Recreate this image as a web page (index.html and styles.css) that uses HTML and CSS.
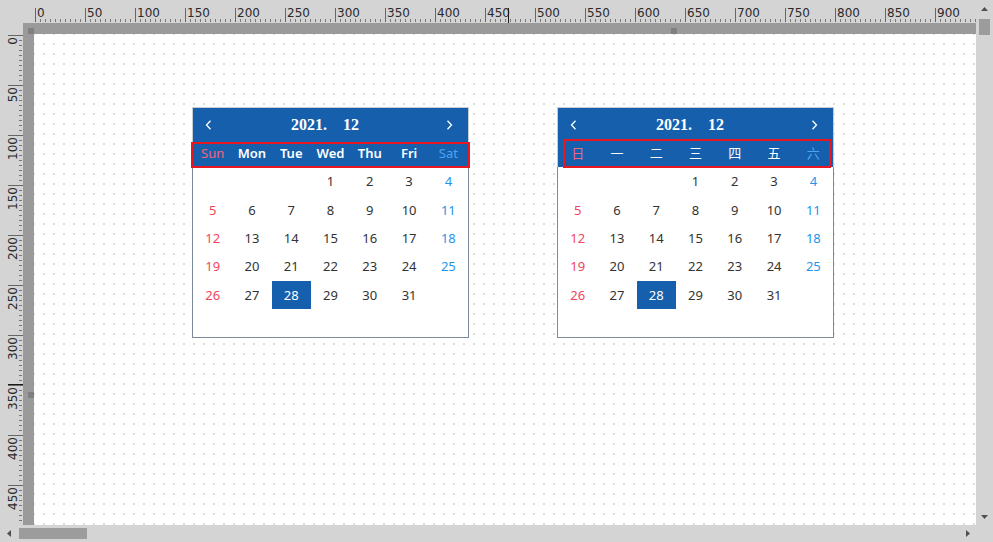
FILE: index.html
```html
<!DOCTYPE html>
<html lang="zh-CN">
<head>
<meta charset="utf-8">
<title>Calendar designer</title>
<link rel="stylesheet" href="styles.css">
</head>
<body>
<div class="window">
  <div class="workspace">
    <div class="ruler-top">
      <div class="scale-x">
        <span>0</span><span>50</span><span>100</span><span>150</span><span>200</span><span>250</span><span>300</span><span>350</span><span>400</span><span>450</span><span>500</span><span>550</span><span>600</span><span>650</span><span>700</span><span>750</span><span>800</span><span>850</span><span>900</span>
      </div>
    </div>
    <div class="ruler-left">
      <div class="scale-y">
        <div class="ylabel"><span>0</span></div>
        <div class="ylabel"><span>50</span></div>
        <div class="ylabel"><span>100</span></div>
        <div class="ylabel"><span>150</span></div>
        <div class="ylabel"><span>200</span></div>
        <div class="ylabel"><span>250</span></div>
        <div class="ylabel"><span>300</span></div>
        <div class="ylabel"><span>350</span></div>
        <div class="ylabel"><span>400</span></div>
        <div class="ylabel"><span>450</span></div>
      </div>
    </div>
    <div class="bar-corner"><i class="marker"></i></div>
    <div class="bar-top"><i class="marker marker-x"></i></div>
    <div class="bar-left"><i class="marker marker-y"></i></div>
    <div class="cursor-x"></div>
    <div class="cursor-y"></div>

    <div class="canvas">
      <div class="cal cal-1">
        <div class="cal-head">
          <div class="cal-title-row">
            <span class="nav"><svg width="7" height="10" viewBox="0 0 7 10"><path d="M5.5 0.8 L1.5 5 L5.5 9.2" fill="none" stroke="#fff" stroke-width="1.3"/></svg></span>
            <div class="cal-title">2021.&emsp;12</div>
            <span class="nav"><svg width="7" height="10" viewBox="0 0 7 10"><path d="M1.5 0.8 L5.5 5 L1.5 9.2" fill="none" stroke="#fff" stroke-width="1.3"/></svg></span>
          </div>
          <div class="cal-week">
            <span class="sun">Sun</span><span>Mon</span><span>Tue</span><span>Wed</span><span>Thu</span><span>Fri</span><span class="sat">Sat</span>
          </div>
        </div>
        <div class="cal-days">
          <span></span><span></span><span></span><span>1</span><span>2</span><span>3</span><span class="sat">4</span>
          <span class="sun">5</span><span>6</span><span>7</span><span>8</span><span>9</span><span>10</span><span class="sat">11</span>
          <span class="sun">12</span><span>13</span><span>14</span><span>15</span><span>16</span><span>17</span><span class="sat">18</span>
          <span class="sun">19</span><span>20</span><span>21</span><span>22</span><span>23</span><span>24</span><span class="sat">25</span>
          <span class="sun">26</span><span>27</span><span class="sel">28</span><span>29</span><span>30</span><span>31</span><span></span>
        </div>
      </div>

      <div class="cal cal-2">
        <div class="cal-head">
          <div class="cal-title-row">
            <span class="nav"><svg width="7" height="10" viewBox="0 0 7 10"><path d="M5.5 0.8 L1.5 5 L5.5 9.2" fill="none" stroke="#fff" stroke-width="1.3"/></svg></span>
            <div class="cal-title">2021.&emsp;12</div>
            <span class="nav"><svg width="7" height="10" viewBox="0 0 7 10"><path d="M1.5 0.8 L5.5 5 L1.5 9.2" fill="none" stroke="#fff" stroke-width="1.3"/></svg></span>
          </div>
          <div class="cal-week cal-week-cn">
            <span class="sun">日</span><span>一</span><span>二</span><span>三</span><span>四</span><span>五</span><span class="sat">六</span>
          </div>
        </div>
        <div class="cal-days">
          <span></span><span></span><span></span><span>1</span><span>2</span><span>3</span><span class="sat">4</span>
          <span class="sun">5</span><span>6</span><span>7</span><span>8</span><span>9</span><span>10</span><span class="sat">11</span>
          <span class="sun">12</span><span>13</span><span>14</span><span>15</span><span>16</span><span>17</span><span class="sat">18</span>
          <span class="sun">19</span><span>20</span><span>21</span><span>22</span><span>23</span><span>24</span><span class="sat">25</span>
          <span class="sun">26</span><span>27</span><span class="sel">28</span><span>29</span><span>30</span><span>31</span><span></span>
        </div>
      </div>

      <div class="annot annot-1"></div>
      <div class="annot annot-2"></div>
    </div>
  </div>

  <div class="vscroll">
    <div class="sb-btn"><svg width="7" height="4" viewBox="0 0 7 4"><path d="M0 4 L3.5 0 L7 4Z" fill="#505050"/></svg></div>
    <div class="vthumb"></div>
    <div class="sb-track"></div>
    <div class="sb-btn"><svg width="7" height="4" viewBox="0 0 7 4"><path d="M0 0 L3.5 4 L7 0Z" fill="#505050"/></svg></div>
  </div>
  <div class="hscroll">
    <div class="sb-btn"><svg width="4" height="7" viewBox="0 0 4 7"><path d="M4 0 L0 3.5 L4 7Z" fill="#505050"/></svg></div>
    <div class="hthumb"></div>
    <div class="sb-track"></div>
    <div class="sb-btn"><svg width="4" height="7" viewBox="0 0 4 7"><path d="M0 0 L4 3.5 L0 7Z" fill="#505050"/></svg></div>
  </div>
  <div class="sb-corner"></div>
</div>
</body>
</html>
```
FILE: styles.css
```css
* { box-sizing: border-box; }
html, body { margin: 0; padding: 0; }
body {
  width: 993px;
  height: 542px;
  overflow: hidden;
  background: #d4d4d4;
  font-family: "DejaVu Sans", "Liberation Sans", sans-serif;
}

.window {
  display: grid;
  grid-template-columns: 976px 17px;
  grid-template-rows: 525px 17px;
  width: 993px;
  height: 542px;
  background: #d4d4d4;
}

.workspace {
  grid-column: 1;
  grid-row: 1;
  display: grid;
  grid-template-columns: 23px 11px 942px;
  grid-template-rows: 23px 11px 491px;
  position: relative;
}

/* rulers */
.ruler-top {
  grid-column: 1 / 4;
  grid-row: 1;
  padding-left: 35px;
  overflow: hidden;
}
.scale-x {
  display: flex;
  height: 23px;
  background-image:
    linear-gradient(to right, #666 1px, transparent 1px),
    linear-gradient(to right, #777 1px, transparent 1px);
  background-size: 50px 14px, 5px 3px;
  background-position: 0 8px, 0 19px;
  background-repeat: repeat-x;
}
.scale-x span {
  flex: 0 0 50px;
  padding: 7px 0 0 2px;
  font-size: 12px;
  line-height: 12px;
  color: #2a2a2a;
}

.ruler-left {
  grid-column: 1;
  grid-row: 2 / 4;
  padding-top: 12px;
  overflow: hidden;
}
.scale-y {
  display: flex;
  flex-direction: column;
  width: 23px;
  background-image:
    linear-gradient(to bottom, #666 1px, transparent 1px),
    linear-gradient(to bottom, #777 1px, transparent 1px);
  background-size: 15px 50px, 3px 5px;
  background-position: 8px 0, 19px 0;
  background-repeat: repeat-y;
}
.ylabel {
  flex: 0 0 50px;
  display: flex;
  align-items: flex-start;
}
.ylabel span {
  writing-mode: vertical-rl;
  transform: rotate(180deg);
  margin: 2px 0 0 7px;
  font-size: 12px;
  line-height: 12px;
  color: #2a2a2a;
}

/* dark bars */
.bar-corner {
  grid-column: 2;
  grid-row: 2;
  background: #9a9a9a;
  display: flex;
  justify-content: flex-end;
  align-items: flex-end;
}
.bar-top {
  grid-column: 3;
  grid-row: 2;
  background: #9a9a9a;
  display: flex;
  align-items: flex-end;
}
.bar-left {
  grid-column: 2;
  grid-row: 3;
  background: #9a9a9a;
  display: flex;
  flex-direction: column;
  align-items: flex-end;
}
.marker {
  display: block;
  width: 6px;
  height: 6px;
  background: #808080;
}
.marker-x { margin-left: 637px; }
.marker-y { margin-top: 358px; }

.cursor-x {
  position: absolute;
  left: 508px;
  top: 8px;
  width: 1px;
  height: 15px;
  background: #1a1a1a;
}
.cursor-y {
  position: absolute;
  left: 8px;
  top: 384px;
  width: 15px;
  height: 1px;
  background: #1a1a1a;
}

/* canvas */
.canvas {
  grid-column: 3;
  grid-row: 3;
  position: relative;
  overflow: hidden;
  background-color: #fff;
  background-image:
    linear-gradient(to right, #fff 8px, transparent 8px),
    linear-gradient(to bottom, #fff 8px, #dedede 8px);
  background-size: 10px 10px;
  background-position: 1px 1px;
}

/* calendar */
.cal {
  position: absolute;
  top: 73px;
  width: 277px;
  font-family: "Noto Sans", "Noto Sans CJK SC", sans-serif;
}
.cal-1 { left: 158px; }
.cal-2 { left: 523px; }

.cal-head {
  background: #155fad;
  border: 1px solid #c6ccd3;
  border-bottom: 0;
}
.cal-title-row {
  height: 33px;
  display: flex;
  align-items: center;
  padding: 1px 15px 0 12px;
}
.nav {
  display: flex;
  width: 7px;
  height: 10px;
}
.cal-title {
  flex: 1;
  text-align: center;
  padding-right: 8px;
  font-family: "Liberation Serif", serif;
  font-weight: 700;
  font-size: 16px;
  color: #fff;
}
.cal-week {
  height: 26px;
  padding-bottom: 3px;
  display: grid;
  grid-template-columns: repeat(7, 1fr);
  align-items: center;
  justify-items: center;
  font-size: 13px;
  font-weight: 600;
  color: #fff;
}
.cal-week .sun { color: #f0677a; font-weight: 400; }
.cal-week .sat { color: #4aa6f2; font-weight: 400; }
.cal-week-cn {
  font-family: "Noto Sans CJK SC", sans-serif;
  font-weight: 400;
}

.cal-days {
  background: #fff;
  border: 1px solid #7d8a99;
  border-top: 0;
  display: grid;
  grid-template-columns: repeat(7, 1fr);
  grid-template-rows: repeat(6, 28.4px);
  font-size: 13px;
  color: #333;
}
.cal-days span {
  display: flex;
  align-items: center;
  justify-content: center;
}
.cal-days .sun { color: #f2435c; }
.cal-days .sat { color: #1e94ea; }
.cal-days .sel {
  background: #155fad;
  color: #fff;
}

.annot {
  position: absolute;
  border: 2px solid #e8161e;
}
.annot-1 { left: 157px; top: 108px; width: 279px; height: 26px; }
.annot-2 { left: 529px; top: 105px; width: 268px; height: 29px; }

/* scrollbars */
.vscroll {
  grid-column: 2;
  grid-row: 1;
  display: flex;
  flex-direction: column;
}
.hscroll {
  grid-column: 1;
  grid-row: 2;
  display: flex;
}
.sb-btn {
  flex: 0 0 17px;
  display: flex;
  align-items: center;
  justify-content: center;
}
.sb-track { flex: 1; }
.vthumb {
  margin: 2px 0 0 3px;
  width: 11px;
  height: 16px;
  background: #9c9c9c;
}
.hthumb {
  margin: 3px 0 0 2px;
  width: 68px;
  height: 11px;
  background: #9c9c9c;
}
.sb-corner {
  grid-column: 2;
  grid-row: 2;
}
```
